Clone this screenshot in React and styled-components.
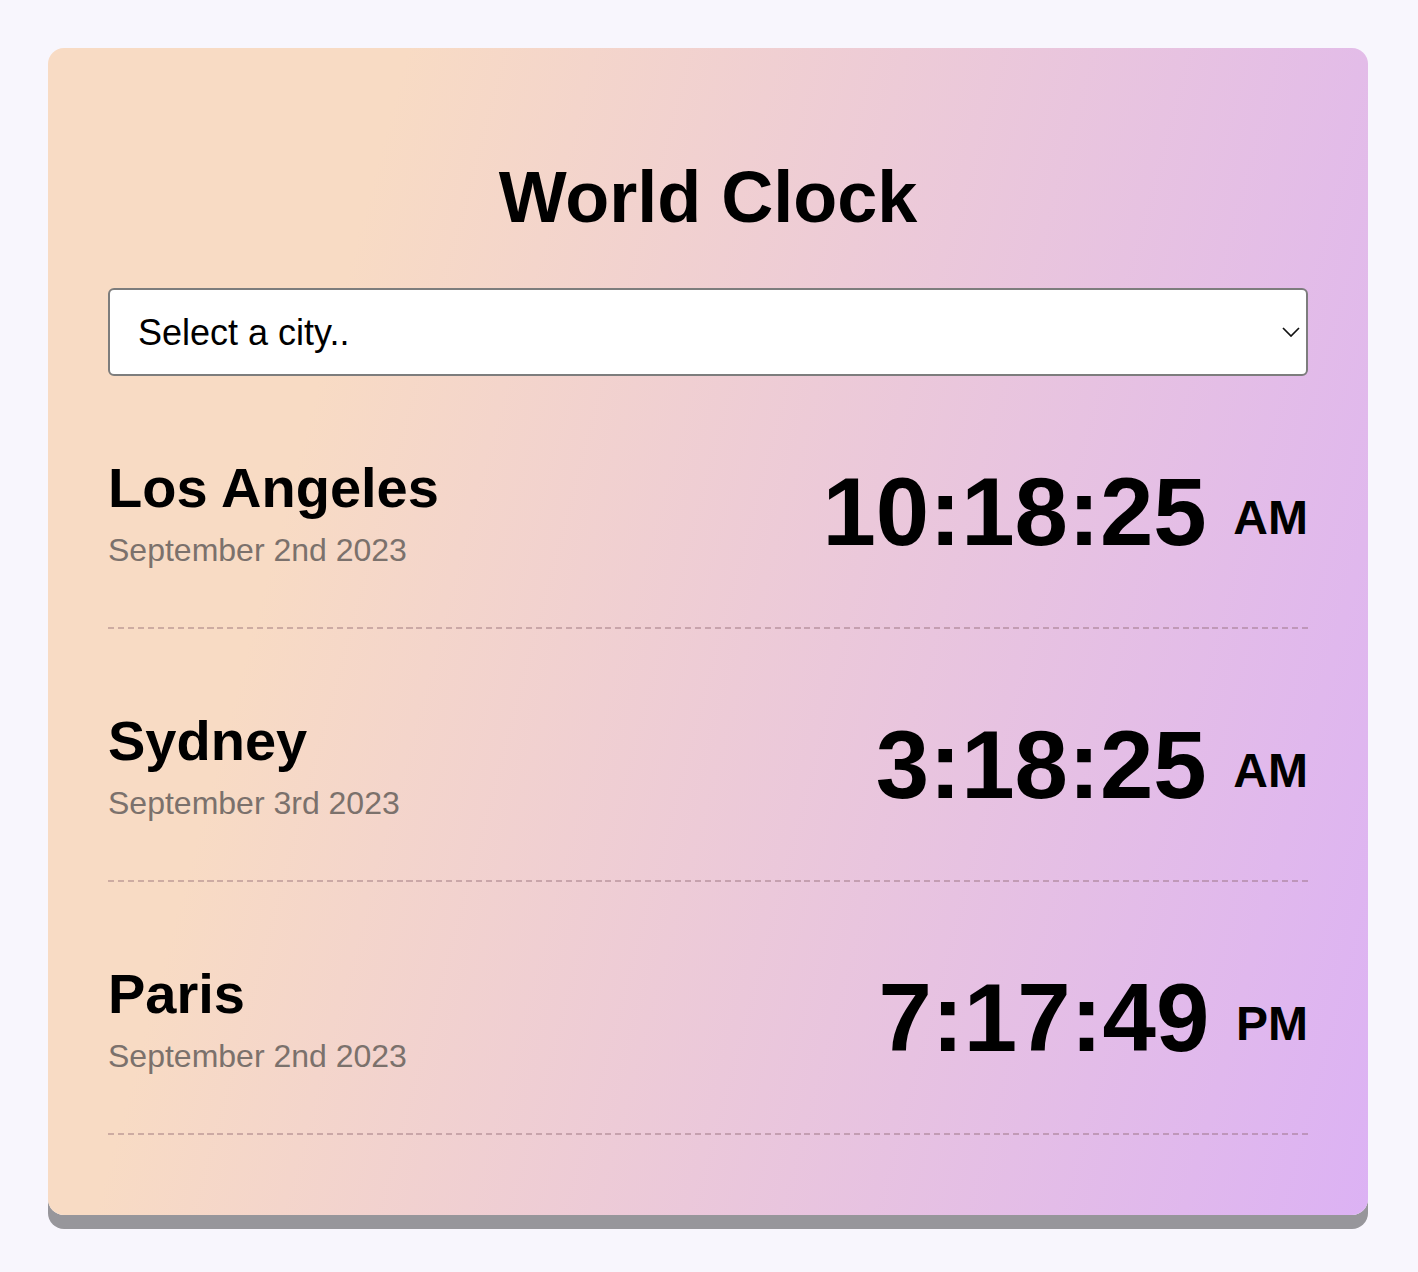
import styled, { createGlobalStyle } from 'styled-components';

const GlobalStyle = createGlobalStyle`
  * {
    box-sizing: border-box;
  }

  body {
    margin: 0;
    background: #f8f6fd;
    font-family: 'Liberation Sans', Arial, Helvetica, sans-serif;
    color: #000;
  }
`;

const Page = styled.main`
  padding: 48px 50px 44px 48px;
`;

const Card = styled.section`
  width: 1320px;
  padding: 60px 60px 80px;
  border-radius: 16px;
  background: linear-gradient(105deg, #f8dbc4 22%, #dcb2f4 100%);
  box-shadow: 0 14px 0 #97969b;
`;

const Title = styled.h1`
  margin: 48px 0 50px;
  text-align: center;
  font-size: 72px;
  font-weight: 700;
  line-height: normal;
`;

const SelectWrap = styled.div`
  position: relative;

  svg {
    position: absolute;
    right: 8px;
    top: 50%;
    transform: translateY(-50%);
    pointer-events: none;
  }
`;

const CitySelect = styled.select`
  width: 100%;
  height: 88px;
  padding: 0 28px;
  border: 2px solid #7d7d7d;
  border-radius: 6px;
  background: #fff;
  font-family: inherit;
  font-size: 36px;
  color: #000;
  appearance: none;
  -webkit-appearance: none;
  outline: none;
`;

const Row = styled.div`
  display: flex;
  justify-content: space-between;
  align-items: center;
  margin-top: 79px;
  padding-bottom: 60px;
  background: repeating-linear-gradient(
      to right,
      rgba(140, 100, 110, 0.4) 0 6px,
      transparent 6px 9.95px
    )
    bottom left / 100% 2px no-repeat;
`;

const CityInfo = styled.div`
  display: flex;
  flex-direction: column;
`;

const CityName = styled.h2`
  margin: 0 0 12px;
  font-size: 56px;
  font-weight: 700;
  line-height: normal;
`;

const CityDate = styled.div`
  font-size: 32px;
  color: #7b716c;
  line-height: normal;
`;

const Time = styled.div`
  font-size: 96px;
  font-weight: 700;
  line-height: normal;
  white-space: nowrap;

  small {
    font-size: 48px;
    vertical-align: 11px;
  }
`;

const clocks = [
  { city: 'Los Angeles', date: 'September 2nd 2023', time: '10:18:25', period: 'AM' },
  { city: 'Sydney', date: 'September 3rd 2023', time: '3:18:25', period: 'AM' },
  { city: 'Paris', date: 'September 2nd 2023', time: '7:17:49', period: 'PM' },
];

export default function App() {
  return (
    <Page>
      <GlobalStyle />
      <Card>
        <Title>World Clock</Title>
        <SelectWrap>
          <CitySelect defaultValue="">
            <option value="">Select a city..</option>
            <option value="tokyo">Tokyo</option>
            <option value="london">London</option>
          </CitySelect>
          <svg width="18" height="10" viewBox="0 0 18 10" fill="none">
            <path d="M1 1l8 8 8-8" stroke="#111" strokeWidth="1.7" />
          </svg>
        </SelectWrap>

        {clocks.map((c) => (
          <Row key={c.city}>
            <CityInfo>
              <CityName>{c.city}</CityName>
              <CityDate>{c.date}</CityDate>
            </CityInfo>
            <Time>
              {c.time} <small>{c.period}</small>
            </Time>
          </Row>
        ))}
      </Card>
    </Page>
  );
}
